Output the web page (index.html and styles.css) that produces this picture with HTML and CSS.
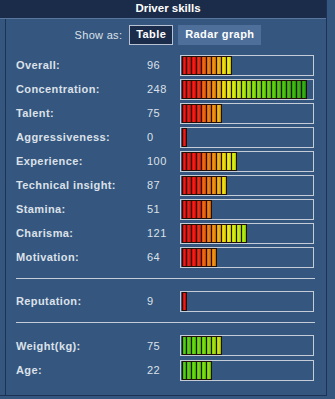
FILE: index.html
```html
<!DOCTYPE html>
<html lang="en">
<head>
    <meta charset="UTF-8">
    <title>Driver skills</title>
    <link rel="stylesheet" href="styles.css">
</head>
<body>
    <div class="frame">
        <div class="header">Driver skills</div>
        <div class="panel">
            <div class="switch">
                <span class="switch-label">Show as:</span>
                <span class="tab active">Table</span>
                <span class="tab">Radar graph</span>
            </div>

            <div class="skills" id="main"></div>
            <hr>
            <div class="skills" id="rep"></div>
            <hr>
            <div class="skills" id="body"></div>
        </div>
    </div>

    <script>
        var warm = ['#f00000','#f20400','#f40800','#f41800','#f45a00','#f67400','#f88a00','#f8b400','#f8e000','#f4f400',
                    '#dcf400','#c6f200','#b0f000','#98ea00','#84e600','#72e200','#64dc00','#58d600','#4ed000','#44ca00',
                    '#3cc400','#34bc00','#2eb600','#28b000','#22aa00'];
        var green = ['#3ccc00','#4ad400','#58dc00','#62e000','#6ee200','#80e400','#a0e600','#c4ea00'];

        function fill(id, rows, colors) {
            var box = document.getElementById(id);
            rows.forEach(function (r) {
                var row = document.createElement('div');
                row.className = 'row';
                var segs = '';
                for (var i = 0; i < r[2]; i++) {
                    segs += '<i style="background-color:' + colors[i] + '"></i>';
                }
                row.innerHTML = '<span class="name">' + r[0] + ':</span>' +
                    '<span class="val">' + r[1] + '</span>' +
                    '<span class="bar">' + segs + '</span>';
                box.appendChild(row);
            });
        }

        fill('main', [
            ['Overall', 96, 10],
            ['Concentration', 248, 25],
            ['Talent', 75, 8],
            ['Aggressiveness', 0, 1],
            ['Experience', 100, 11],
            ['Technical insight', 87, 9],
            ['Stamina', 51, 6],
            ['Charisma', 121, 13],
            ['Motivation', 64, 7]
        ], warm);
        fill('rep', [['Reputation', 9, 1]], warm);
        fill('body', [['Weight(kg)', 75, 8], ['Age', 22, 6]], green);
    </script>
</body>
</html>
```

FILE: styles.css
```css
body {
    margin: 0;
    background: #34567f;
    font-family: 'Liberation Sans', Arial, sans-serif;
    font-size: 11px;
    color: #dce1e9;
}

.frame {
    width: 327px;
    height: 396px;
    border-right: 1px solid #1d3254;
    border-bottom: 1px solid #1d3254;
    box-sizing: border-box;
}

.header {
    height: 18px;
    line-height: 17px;
    background: #1b2c4a;
    border-bottom: 1px solid #5876a0;
    color: #fff;
    font-weight: bold;
    font-size: 11.5px;
    text-align: center;
    padding-left: 10px;
}

.panel {
    margin-left: 5px;
    border-left: 1px solid #1d3254;
    height: 376px;
    padding: 6px 10px 0 10px;
}

.switch {
    display: flex;
    align-items: center;
    justify-content: center;
    gap: 5px;
    height: 20px;
    margin-bottom: 8px;
    padding-left: 4px;
}

.switch-label {
    margin-right: 2px;
    letter-spacing: 0.3px;
}

.tab {
    height: 20px;
    line-height: 19px;
    padding: 0 7px;
    box-sizing: border-box;
    background: #4d6f99;
    color: #fff;
    font-weight: bold;
    letter-spacing: 0.4px;
}

.tab.active {
    background: #1b2c4a;
    border: 1px solid #b8c2d2;
    line-height: 17px;
    padding: 0 6px;
}

.row {
    display: grid;
    grid-template-columns: 131px 33px 134px;
    align-items: center;
    height: 24px;
}

.name {
    font-weight: bold;
    letter-spacing: 0.4px;
}

.val {
    letter-spacing: 0.5px;
}

.bar {
    display: flex;
    align-items: center;
    height: 21px;
    border: 1px solid #c4ccd8;
    box-sizing: border-box;
    padding-left: 1px;
}

.bar i {
    display: block;
    width: 4px;
    height: 17px;
    border: 1px solid #201008;
    border-left: none;
    background-image: linear-gradient(to right, rgba(0,0,0,0.15), rgba(255,255,255,0.12) 45%, rgba(0,0,0,0.25));
}

.bar i:first-child {
    border-left: 1px solid #201008;
    width: 3px;
}

hr {
    border: none;
    border-top: 1px solid #c4ccd8;
    margin: 9px 0 10px 0;
    width: 299px;
}

.skills:last-child .row:first-child {
    height: 25px;
}
```
